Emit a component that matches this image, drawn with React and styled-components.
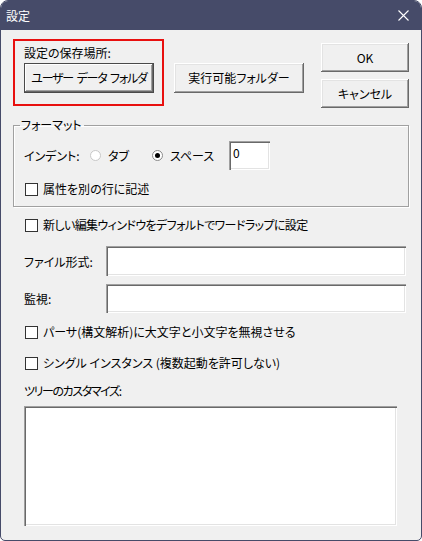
import React from "react";
import styled, { createGlobalStyle, css } from "styled-components";

const GlobalStyle = createGlobalStyle`
  html, body {
    margin: 0;
    padding: 0;
    background: #ffffff;
  }
  body {
    font-family: "Noto Sans CJK JP", "Noto Sans", sans-serif;
    font-size: 12px;
    font-feature-settings: "palt";
    color: #000;
  }
  button {
    font-feature-settings: "palt";
  }
`;

// Window chrome
const Window = styled.div`
  width: 422px;
  height: 541px;
  box-sizing: border-box;
  border: 1px solid #464b69;
  border-radius: 8px 8px 5px 5px;
  overflow: hidden;
  display: flex;
  flex-direction: column;
  background: #f0f0f0;
`;

const TitleBar = styled.div`
  height: 29px;
  flex: none;
  background: #464b69;
  color: #fff;
  display: flex;
  align-items: center;
  justify-content: space-between;
  padding: 0 12px 0 5px;
  font-size: 12px;
  line-height: 14px;
`;

const Body = styled.div`
  flex: 1;
  display: flex;
  flex-direction: column;
  padding: 9px 12px 0 12px;
`;

// Top area
const TopRow = styled.div`
  display: flex;
  align-items: flex-start;
`;

const SaveBox = styled.div`
  width: 151px;
  box-sizing: border-box;
  border: 2px solid #e8100f;
  padding: 4px 8px 11px 9px;
  display: flex;
  flex-direction: column;
`;

const Label = styled.span`
  line-height: 15px;
  white-space: nowrap;
  width: ${(p) => (p.$w ? `${p.$w}px` : "auto")};
  letter-spacing: ${(p) => p.$ls || 0}px;
  flex: none;
`;

const Button = styled.button`
  font: inherit;
  color: #000;
  width: ${(p) => p.$w}px;
  height: ${(p) => p.$h || 30}px;
  margin-top: ${(p) => p.$mt || 0}px;
  margin-left: ${(p) => p.$ml || 0}px;
  padding: 0;
  border: none;
  background: #f0f0f0;
  line-height: 14px;
  letter-spacing: ${(p) => p.$ls || 0}px;
  word-spacing: ${(p) => (p.$ls ? 2 : 0)}px;
  white-space: nowrap;
  box-shadow: inset -1px -1px 0 #696969, inset 1px 1px 0 #ffffff,
    inset -2px -2px 0 #a0a0a0, inset 2px 2px 0 #e3e3e3;
  ${(p) =>
    p.$default &&
    css`
      box-shadow: inset 0 0 0 1px #4a4a4a, inset -2px -2px 0 #696969,
        inset 2px 2px 0 #ffffff, inset -3px -3px 0 #a0a0a0;
    `}
`;

const SideButtons = styled.div`
  margin-left: auto;
  margin-top: 4px;
  display: flex;
  flex-direction: column;
  gap: 7px;
`;

// Format group
const Group = styled.fieldset`
  margin: 10px 0 0 0;
  padding: 0;
  width: 396px;
  box-sizing: border-box;
  border: 1px solid #a0a0a0;
  box-shadow: 1px 1px 0 #fff, inset 1px 1px 0 #fff;
  height: 89px;
`;

const Legend = styled.legend`
  margin-left: 6px;
  padding: 0 2px 0 1px;
  line-height: 14px;
`;

const GroupInner = styled.div`
  padding: 1px 0 0 10px;
  display: flex;
  flex-direction: column;
`;

const Row = styled.div`
  display: flex;
  align-items: center;
  margin-top: ${(p) => p.$mt || 0}px;
`;

const Radio = styled.span`
  width: 11px;
  height: 11px;
  box-sizing: border-box;
  border-radius: 50%;
  border: 1px solid ${(p) => (p.$on ? "#8a8a8a" : "#c8c8c8")};
  background: #fff;
  display: inline-flex;
  align-items: center;
  justify-content: center;
  flex: none;
  &::after {
    content: "";
    width: 5px;
    height: 5px;
    border-radius: 50%;
    background: ${(p) => (p.$on ? "#000" : "transparent")};
  }
`;

const Option = styled.label`
  display: flex;
  align-items: center;
  gap: 7px;
  line-height: 15px;
  width: ${(p) => p.$w}px;
  flex: none;
`;

const TextInput = styled.div`
  width: ${(p) => p.$w}px;
  height: ${(p) => p.$h || 29}px;
  box-sizing: border-box;
  background: #fff;
  margin-left: ${(p) => p.$ml || 0}px;
  padding: 5px 0 0 4px;
  line-height: 14px;
  box-shadow: inset 1px 1px 0 #a0a0a0, inset 2px 2px 0 #696969,
    inset -1px -1px 0 #ffffff, inset -2px -2px 0 #e3e3e3;
`;

const Check = styled.span`
  width: 13px;
  height: 13px;
  box-sizing: border-box;
  border: 1px solid #333;
  background: #fff;
  flex: none;
  margin-left: 1px;
`;

const CheckRow = styled.label`
  display: flex;
  align-items: center;
  gap: 5px;
  line-height: 16px;
  margin-top: ${(p) => p.$mt || 0}px;
  letter-spacing: ${(p) => p.$ls || 0}px;
`;

const Lower = styled.div`
  padding-left: 11px;
  display: flex;
  flex-direction: column;
`;

const TreeBox = styled(TextInput)`
  margin-top: 8px;
`;

const CloseIcon = () => (
  <svg width="11" height="11" viewBox="0 0 11 11">
    <path d="M0.5 0.5 L10.5 10.5 M10.5 0.5 L0.5 10.5" stroke="#fff" strokeWidth="1.1" />
  </svg>
);

const CheckItem = ({ mt, ls, children }) => (
  <CheckRow $mt={mt} $ls={ls}>
    <Check />
    <span>{children}</span>
  </CheckRow>
);

export default function App() {
  return (
    <>
      <GlobalStyle />
      <Window>
        <TitleBar>
          <span>設定</span>
          <CloseIcon />
        </TitleBar>
        <Body>
          <TopRow>
            <SaveBox>
              <Label>設定の保存場所:</Label>
              <Button $w={130} $mt={3} $ls={-1.2} $default>
                ユーザー データ フォルダ
              </Button>
            </SaveBox>
            <Button $w={130} $mt={24} $ml={10}>
              実行可能フォルダー
            </Button>
            <SideButtons>
              <Button $w={88} $h={29}>OK</Button>
              <Button $w={88} $h={29}>キャンセル</Button>
            </SideButtons>
          </TopRow>

          <Group>
            <Legend>フォーマット</Legend>
            <GroupInner>
              <Row $mt={8}>
                <Label $w={66}>インデント:</Label>
                <Option $w={62}>
                  <Radio />
                  タブ
                </Option>
                <Option $w={77}>
                  <Radio $on />
                  スペース
                </Option>
                <TextInput $w={41}>0</TextInput>
              </Row>
              <CheckItem mt={11}>属性を別の行に記述</CheckItem>
            </GroupInner>
          </Group>

          <Lower>
            <CheckItem mt={10} ls={-0.6}>
              新しい編集ウィンドウをデフォルトでワードラップに設定
            </CheckItem>
            <Row $mt={13}>
              <Label $w={82}>ファイル形式:</Label>
              <TextInput $w={300} $h={30} />
            </Row>
            <Row $mt={8}>
              <Label $w={82}>監視:</Label>
              <TextInput $w={300} $h={29} />
            </Row>
            <CheckItem mt={11}>パーサ(構文解析)に大文字と小文字を無視させる</CheckItem>
            <CheckItem mt={15}>シングル インスタンス (複数起動を許可しない)</CheckItem>
            <Row $mt={12}>
              <Label $ls={-1.4}>ツリーのカスタマイズ:</Label>
            </Row>
            <TreeBox $w={373} $h={120} />
          </Lower>
        </Body>
      </Window>
    </>
  );
}
